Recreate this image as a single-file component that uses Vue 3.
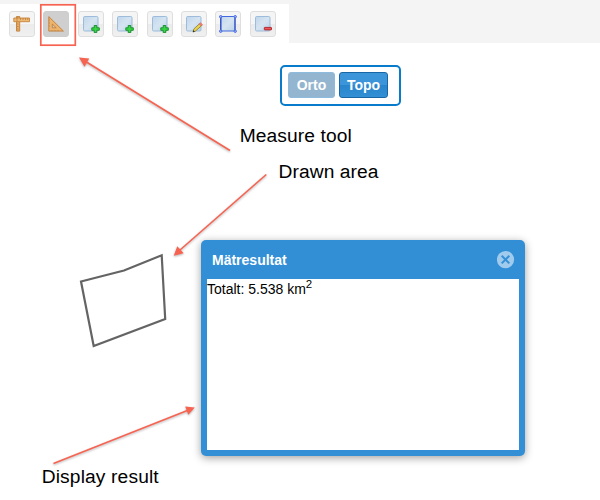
<script setup>
const tools = [
  { id: 'length', label: 'Measure length' },
  { id: 'area', label: 'Measure area', active: true },
  { id: 'add', label: 'Add point' },
  { id: 'add', label: 'Add line' },
  { id: 'add', label: 'Add polygon' },
  { id: 'edit', label: 'Edit' },
  { id: 'select', label: 'Select' },
  { id: 'remove', label: 'Remove' },
]

const arrows = [
  { x1: 230, y1: 150.5, x2: 86, y2: 61.7, head: '79,57.5 89.2,58.5 84.5,66.7' },
  { x1: 266.3, y1: 174.5, x2: 180, y2: 250, head: '173.7,255.7 177.3,246.3 183.7,253.3' },
  { x1: 53.5, y1: 463.4, x2: 188, y2: 410.3, head: '194.8,407.5 185.2,406.6 188.3,414.7' },
]

const notes = [
  { text: 'Measure tool', x: 239.7, y: 142, width: 112 },
  { text: 'Drawn area', x: 278.5, y: 178.4, width: 100 },
  { text: 'Display result', x: 41.7, y: 483, width: 117 },
]
</script>

<template>
  <main class="page">
    <header class="header">
      <nav class="toolbar">
        <button
          v-for="(tool, i) in tools"
          :key="i"
          class="tool"
          :class="{ active: tool.active }"
          :aria-label="tool.label"
        >
          <svg v-if="tool.id === 'length'" width="18" height="18" viewBox="0 0 18 18">
            <path d="M3.5 1.5h3.2v14.6H3.5z" fill="#e8ae68" stroke="#c07f3b" stroke-width=".9" />
            <path d="M.8 3h15.7v3.7H.8z" fill="#edb972" stroke="#c6853f" stroke-width=".9" />
            <path d="M4 2v4M7.5 3v2M10 3v2M12.5 3v2M14.7 3v2M4 9h1.5M4 11.5h1.5M4 14h1.5" stroke="#b9783a" stroke-width=".7" />
          </svg>
          <svg v-else-if="tool.id === 'area'" width="18" height="18" viewBox="0 0 18 18">
            <path
              d="M1.8 1.6 16.4 16.1H1.8ZM5.3 9v3.8h3.9z"
              fill="#edb46d"
              stroke="#c17f3c"
              stroke-width=".9"
              fill-rule="evenodd"
            />
            <path d="M2 5h1M2 8h1M2 11h1M5 16v-1M8 16v-1M11 16v-1" stroke="#b9783a" stroke-width=".6" />
          </svg>
          <svg v-else width="18" height="18" viewBox="0 0 18 18">
            <defs>
              <linearGradient :id="'sheet' + i" x1="0" y1="0" x2="1" y2="1">
                <stop offset="0" stop-color="#c0d6eb" />
                <stop offset=".5" stop-color="#d5e4f1" />
                <stop offset="1" stop-color="#bbd3ea" />
              </linearGradient>
            </defs>
            <rect
              x="1.5" y="1.5" width="14.5" height="14.5" rx="1.2"
              :fill="`url(#sheet${i})`"
              :stroke="tool.id === 'select' ? '#4269df' : '#9dbcdb'"
            />
            <path
              v-if="tool.id === 'add'"
              d="M12.2 10.5h2.6v2.3h2.5v2.5h-2.5v2.3h-2.6v-2.3H9.8v-2.5h2.4z"
              fill="#35d544"
              stroke="#168829"
              stroke-width=".9"
            />
            <g v-else-if="tool.id === 'edit'">
              <path d="m8 17 .9-3.1 5.6-5.2 2 2-5.8 5.3z" fill="#e8d34b" stroke="#806d27" stroke-width=".7" />
              <path d="m14.2 8.9 1.3-1.2 2.1 2-1.3 1.3z" fill="#ee8277" stroke="#d95e59" stroke-width=".6" />
              <path d="m7.8 17.2.7-2 1.4 1.3z" fill="#222" />
            </g>
            <g v-else-if="tool.id === 'select'" fill="#a9bdf7" stroke="#4269df">
              <path d="M2 2v14M16 2v14" stroke="#2d47bb" />
              <circle cx="1.7" cy="1.7" r="1.2" />
              <circle cx="16.2" cy="1.7" r="1.2" />
              <circle cx="1.7" cy="16.2" r="1.2" />
              <circle cx="16.2" cy="16.2" r="1.2" />
            </g>
            <rect v-else x="10.3" y="12.4" width="7.2" height="2.5" rx=".5" fill="#ed5959" stroke="#ac2027" stroke-width=".9" />
          </svg>
        </button>
      </nav>
    </header>

    <div class="layers">
      <button class="layer muted">Orto</button>
      <button class="layer">Topo</button>
    </div>

    <section class="dialog">
      <div class="titlebar">
        <span class="title">Mätresultat</span>
        <svg class="close" width="18" height="18" viewBox="0 0 18 18">
          <circle cx="8.5" cy="8.6" r="8.6" fill="#a1cbed" />
          <path d="m4.7 4.8 7.6 7.6m0-7.6-7.6 7.6" stroke="#3590d6" stroke-width="2" />
        </svg>
      </div>
      <div class="result">Totalt: 5.538 km<sup>2</sup></div>
    </section>

    <svg class="annotations" width="600" height="500" viewBox="0 0 600 500">
      <path
        d="M81 281.5 124 270.5 161.7 255.3 165.2 319 93.7 346Z"
        fill="none"
        stroke="#646464"
        stroke-width="2.2"
      />
      <rect class="marker" x="40.8" y="4.8" width="34.5" height="40.4" />
      <g v-for="(a, i) in arrows" :key="i" class="arrow">
        <line :x1="a.x1" :y1="a.y1" :x2="a.x2" :y2="a.y2" />
        <polygon :points="a.head" />
      </g>
      <text
        v-for="n in notes"
        :key="n.text"
        :x="n.x"
        :y="n.y"
        :textLength="n.width"
      >{{ n.text }}</text>
    </svg>
  </main>
</template>

<style>
body {
  margin: 0;
  background: #fff;
}
</style>

<style scoped>
.page {
  position: relative;
  width: 600px;
  height: 500px;
  overflow: hidden;
  background: #fff;
  font-family: "Liberation Sans", Arial, sans-serif;
}
.header {
  box-sizing: border-box;
  height: 43px;
  padding-top: 4px;
  background: #f4f4f4;
}
.toolbar {
  box-sizing: border-box;
  display: flex;
  gap: 8.4px;
  width: 289px;
  height: 39px;
  padding: 7px 0 0 9px;
  background: #fff;
}
.tool {
  box-sizing: border-box;
  display: flex;
  flex: none;
  align-items: center;
  justify-content: center;
  width: 26px;
  height: 26px;
  padding: 0;
  border: 1px solid #dedede;
  border-radius: 3px;
  background: linear-gradient(#f5f5f5 0 50%, #ebebeb 50%, #f0f0f0);
}
.tool.active {
  border-color: #cdcdcd;
  background: #cfcfcf;
}
.tool svg {
  flex: none;
}
.layers {
  position: absolute;
  top: 65px;
  left: 280px;
  box-sizing: border-box;
  display: flex;
  gap: 4px;
  width: 121px;
  height: 41px;
  padding: 5px 0 0 6px;
  border: 2px solid #087bcb;
  border-radius: 5px;
}
.layer {
  box-sizing: border-box;
  width: 49px;
  height: 26px;
  padding: 0 0 1px;
  border: 1px solid #1766a5;
  border-radius: 3px;
  background: linear-gradient(#3b95d8 0 50%, #2985cb 50%, #3390d5);
  color: #fff;
  font: bold 14px "Liberation Sans", Arial, sans-serif;
}
.layer.muted {
  width: 47px;
  border-color: #8dbbde;
  background: #94b5cf;
}
.dialog {
  position: absolute;
  top: 240px;
  left: 201px;
  box-sizing: border-box;
  display: flex;
  flex-direction: column;
  width: 324px;
  height: 216px;
  padding: 0 6px 6px;
  border-radius: 5px;
  background: #328fd6;
  box-shadow: 0 2px 8px rgba(0, 0, 0, 0.38);
}
.titlebar {
  display: flex;
  align-items: center;
  justify-content: space-between;
  flex: none;
  height: 39px;
  padding: 0 4px 0 5px;
}
.title {
  padding-top: 1px;
  color: #fff;
  font-size: 14px;
  font-weight: bold;
}
.result {
  flex: 1;
  background: #fff;
  color: #000;
  font-size: 14px;
  line-height: 21px;
}
.result sup {
  position: relative;
  top: -6px;
  font-size: 11.5px;
  line-height: 0;
  vertical-align: baseline;
}
.annotations {
  position: absolute;
  inset: 0;
  pointer-events: none;
}
.annotations text {
  fill: #000;
  font-size: 19.2px;
}
.marker {
  fill: none;
  stroke: #f76351;
  stroke-width: 1.7;
}
.arrow {
  fill: #f76351;
  filter: drop-shadow(0 1px 1px rgba(0, 0, 0, 0.3));
}
.arrow line {
  stroke: #f76351;
  stroke-width: 1.6;
}
</style>
